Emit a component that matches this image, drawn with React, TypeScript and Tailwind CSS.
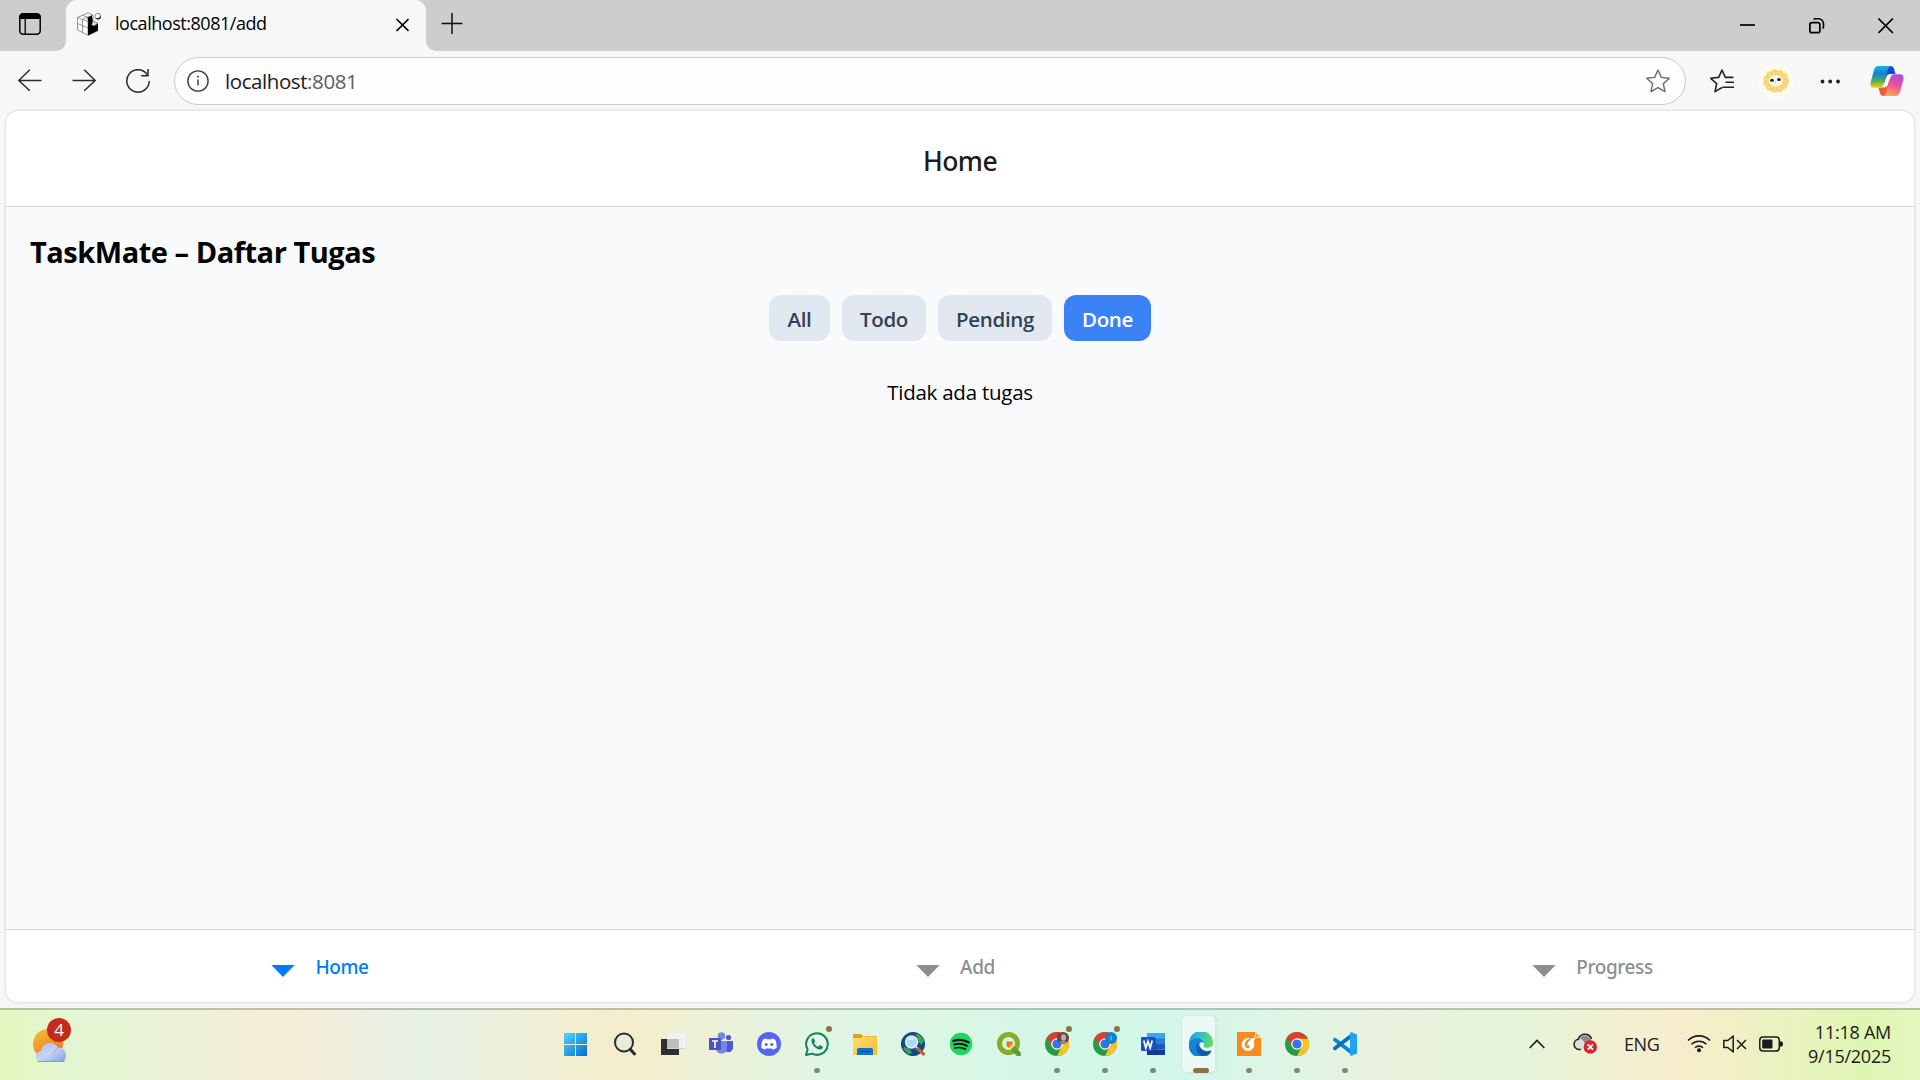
import type { ReactNode } from "react";

type IconProps = { w?: number; h?: number; className?: string; children: ReactNode };

function Icon({ w = 24, h = 24, className = "", children }: IconProps) {
  return (
    <svg width={w} height={h} viewBox={`0 0 ${w} ${h}`} fill="none" className={`shrink-0 ${className}`}>
      {children}
    </svg>
  );
}

/* ---------- Browser chrome ---------- */

function CubeFavicon() {
  return (
    <Icon>
      <path d="M.5 5.500 11 .8l5 2.200v6l4.500 2v8L11 23.300.5 18Z" fill="#fff" stroke="#8a8a8a" strokeWidth=".9" strokeLinejoin="round" />
      <path d="M.5 5.500 11 9.500M5.500 3.200 11 5.500M5.500 7.500v13M.5 11.500 11 16M11 9.500V23M5.500 7.500 15.500 3" stroke="#8a8a8a" strokeWidth=".9" />
      <path d="m10.500 5.500 4.500-2 .8 6-4.800 1Z" fill="#000" />
      <path d="M11 10.500 15.500 9v4.500l5.500-2v7L11 23.500Z" fill="#000" />
      <path d="m14.500 12.300 2.500-1.800 3.500 1-3.500 2.200Z" fill="#eee" stroke="#888" strokeWidth=".6" />
      <circle cx="21" cy="4.300" r="3" fill="#fff" stroke="#777" strokeWidth=".8" />
      <path d="M18.300 6a3.200 3.200 0 0 0 5.700-2.500c-1 2-3 3-5.700 2.500Z" fill="#111" />
    </Icon>
  );
}

function TabStrip() {
  return (
    <div className="flex h-[51px] bg-[#f7f7f7]">
      <div className="w-[66px] rounded-br-[10px] bg-[#cdcdcd] pt-[13px] pl-[19px]">
        <Icon w={22} h={22}>
          <rect x=".8" y=".8" width="20.400" height="20.400" rx="3.500" stroke="#000" strokeWidth="1.500" />
          <path d="M.5 6V3.500a3 3 0 0 1 3-3h15a3 3 0 0 1 3 3V6Z" fill="#000" />
          <path d="M6.200 6v15" stroke="#000" strokeWidth="1.300" />
        </Icon>
      </div>
      <div className="w-[360px] bg-[linear-gradient(#cdcdcd_50%,#f7f7f7_50%)]">
        <div className="flex h-[51px] items-start rounded-t-[11px] bg-[#f7f7f7] pt-3 pl-[11px]">
          <CubeFavicon />
          <span className="ml-[14px] w-[280px] text-[18px] leading-[22px] tracking-[-0.46px] text-black">localhost:8081/add</span>
          <Icon w={14} h={14} className="mt-1.5">
            <path d="m1.500 1 12 12M13.500 1l-12 12" stroke="#000" strokeWidth="1.600" />
          </Icon>
        </div>
      </div>
      <div className="flex flex-1 rounded-bl-[10px] bg-[#cdcdcd] pl-[15px]">
        <Icon w={22} h={22} className="mt-3">
          <path d="M11 1v21M.5 11.500h21" stroke="#111" strokeWidth="1.500" />
        </Icon>
        <div className="ml-auto flex gap-[53px] pt-[18px] pr-[26px]">
          <Icon w={16} h={16}>
            <path d="M0 7h15" stroke="#000" strokeWidth="1.700" />
          </Icon>
          <Icon w={16} h={16}>
            <rect x=".9" y="4.700" width="10" height="10" rx="2" stroke="#000" strokeWidth="1.700" />
            <path d="M4.500 1.200C5 .9 6 .8 7 .8h2.500a5 5 0 0 1 5 5V8c0 1.300-.2 2-.6 2.700" stroke="#000" strokeWidth="1.600" />
          </Icon>
          <Icon w={16} h={16}>
            <path d="m.4.5 14.500 14.500M14.900.5.4 15" stroke="#000" strokeWidth="1.700" />
          </Icon>
        </div>
      </div>
    </div>
  );
}

function Toolbar() {
  return (
    <div className="flex h-[60px] items-center bg-[#f7f7f7] pl-[18px]">
      <Icon>
        <path d="M23.500 11.500H.8M11.800.8.8 11.500l11 10.200" stroke="#2a2a2a" strokeWidth="1.500" />
      </Icon>
      <Icon className="ml-[30px]">
        <path d="M.5 11.500h22.700M12.200.8l11 10.700-11 10.200" stroke="#2a2a2a" strokeWidth="1.500" />
      </Icon>
      <Icon className="ml-[30px]">
        <path d="M21.200 5.500A11.200 11.200 0 1 0 23.200 12" stroke="#2a2a2a" strokeWidth="1.500" />
        <path d="M22 0v6.800h-6.800" stroke="#2a2a2a" strokeWidth="1.500" />
      </Icon>
      <div className="ml-6 flex h-12 w-[1512px] items-center rounded-full border-[1.500px] border-[#cbcbcb] bg-[#fdfdfd] pr-[15px] pl-3">
        <Icon w={22} h={22}>
          <circle cx="11" cy="11" r="10.100" stroke="#3c3c3c" strokeWidth="1.400" />
          <path d="M11 9.500v6" stroke="#3c3c3c" strokeWidth="1.500" />
          <circle cx="11" cy="6.700" r="1" fill="#3c3c3c" />
        </Icon>
        <span className="ml-4 flex-1 text-[20.500px] leading-[27px] tracking-[-0.42px] text-[#1b1b1b]">
          localhost<span className="text-[#5c5c5c]">:8081</span>
        </span>
        <Icon>
          <path d="m12 1 3.300 7.400 8 .9-6 5.400 1.700 7.900-7-4-7 4 1.700-7.900-6-5.400 8-.9Z" stroke="#6b6b6b" strokeWidth="1.400" strokeLinejoin="round" />
        </Icon>
      </div>
      <Icon className="ml-6">
        <path d="M12.500 18.300 5 22.600l1.700-7.900-6-5.400 8-.9L12 1l3.300 7.400h8.200M15.500 13.200h8.500M12.500 18.300h11.500" stroke="#222" strokeWidth="1.600" strokeLinejoin="round" />
      </Icon>
      <Icon w={36} h={36} className="ml-6">
        <circle cx="18" cy="18" r="17.600" fill="#fefbee" />
        {[0, 1, 2, 3, 4, 5, 6, 7, 8, 9, 10].map((i) => (
          <circle
            key={i}
            cx={18 + 9.500 * Math.cos((i * 2 * Math.PI) / 11)}
            cy={18 + 8.300 * Math.sin((i * 2 * Math.PI) / 11)}
            r="3"
            fill="#f7dd74"
            stroke="#e6c353"
            strokeWidth=".6"
          />
        ))}
        <ellipse cx="17.800" cy="18" rx="7.600" ry="6.400" fill="#fdf3e3" stroke="#e8c97e" strokeWidth=".7" />
        <ellipse cx="14" cy="17.300" rx="1.900" ry="1.500" fill="#222" />
        <ellipse cx="20.900" cy="16.600" rx="1.900" ry="1.500" fill="#222" />
        <circle cx="17.500" cy="19" r=".6" fill="#c77" />
      </Icon>
      <Icon w={20} h={6} className="ml-[26px]">
        <circle cx="2.500" cy="3.500" r="1.900" fill="#222" />
        <circle cx="10.200" cy="3.500" r="1.900" fill="#222" />
        <circle cx="18" cy="3.500" r="1.900" fill="#222" />
      </Icon>
      <Icon w={34} h={32} className="ml-[30px]">
        <defs>
          <linearGradient id="cpA" x1="0" y1="0" x2="0" y2="1">
            <stop offset="0" stopColor="#17b2ea" />
            <stop offset=".35" stopColor="#1482dc" />
            <stop offset=".68" stopColor="#51ac54" />
            <stop offset="1" stopColor="#f5d400" />
          </linearGradient>
          <linearGradient id="cpB" x1=".7" y1="0" x2=".4" y2="1">
            <stop offset="0" stopColor="#a64ee8" />
            <stop offset=".5" stopColor="#ef5195" />
            <stop offset="1" stopColor="#ffa457" />
          </linearGradient>
        </defs>
        <path d="M16 1h4.500c2 0 3 1.200 3.600 3l1.400 5h-5C18 9 17 10 16.500 12l-3 8Z" fill="#1748c9" />
        <path d="M18 31h-4.500c-2 0-3-1.200-3.600-3L8.500 22.500h5c2.500 0 3.500-1 4-3l3-8Z" fill="#ee5a35" />
        <path d="M8.500 1H21c-1.600.4-2.500 1.800-3.200 4l-4.200 14c-.8 2.600-1.600 3.800-4.100 3.800H4C1 22.800-.1 20.500.7 17L4 5C4.800 2.400 6 1 8.500 1Z" fill="url(#cpA)" />
        <path d="M25.500 31H13c1.600-.4 2.500-1.800 3.200-4l4.200-14c.8-2.600 1.600-3.800 4.100-3.800H30c3 0 4.100 2.300 3.300 5.800L30 27c-.8 2.600-2 4-4.500 4Z" fill="url(#cpB)" />
        <path d="M18.200 10.300h3.300c-.8.6-1.300 1.500-1.700 2.700l-2.400 7.300c-.4 1.200-.9 1.700-2 1.700h-2.700c.7-.5 1.100-1.400 1.500-2.700l2-6.700c.4-1.400.9-2.300 2-2.300Z" fill="#fff" />
      </Icon>
    </div>
  );
}

/* ---------- Page ---------- */

const filters = [
  { label: "All", style: "w-[61px] bg-[#e2e8f0] text-[#334155]" },
  { label: "Todo", style: "w-[84px] bg-[#e2e8f0] text-[#334155]" },
  { label: "Pending", style: "w-[114px] bg-[#e2e8f0] text-[#334155]" },
  { label: "Done", style: "w-[87px] bg-[#3b82f6] text-white" },
];

const tabs = [
  { label: "Home", style: "text-[#007aff] pr-[8px]" },
  { label: "Add", style: "text-[#8e8e8f] pr-[9px]" },
  { label: "Progress", style: "text-[#8e8e8f] pr-[7px]" },
];

function Page() {
  return (
    <div className="mx-[6px] flex h-[891px] flex-col overflow-hidden rounded-xl bg-white shadow-[0_0_2px_1px_#dedede]">
      <header className="flex h-24 items-center justify-center border-b border-[#d8d8d8] pt-[5px] font-['Noto_Sans',sans-serif] text-[26.500px] leading-9 font-medium tracking-[-0.55px] text-[#1c1c1e]">
        Home
      </header>
      <main className="flex-1 bg-[#f9fafc] px-6 pt-[25px]">
        <h1 className="text-[29px] leading-10 font-bold tracking-[-0.47px] text-black">TaskMate – Daftar Tugas</h1>
        <div className="mt-[23px] flex justify-center gap-3">
          {filters.map((f) => (
            <button key={f.label} className={`h-[46px] rounded-xl pt-[3px] text-[20.500px] font-semibold tracking-[-0.3px] ${f.style}`}>
              {f.label}
            </button>
          ))}
        </div>
        <p className="mt-9 text-center text-[20.500px] leading-[30px] tracking-[-0.24px] text-black">Tidak ada tugas</p>
      </main>
      <nav className="grid h-[73px] grid-cols-3 border-t border-[#d8d8d8]">
        {tabs.map((t) => (
          <div
            key={t.label}
            className={`flex items-center justify-center gap-5 font-['Noto_Sans',sans-serif] text-[19px] font-medium tracking-[-0.4px] ${t.style}`}
          >
            <Icon w={24} h={12} className="mt-[10px]">
              <path d="M.3 0h23.400L12 12Z" fill="currentColor" />
            </Icon>
            <span className="pt-[3px]">{t.label}</span>
          </div>
        ))}
      </nav>
    </div>
  );
}

/* ---------- Taskbar icons ---------- */

function WindowsLogo() {
  return (
    <Icon className="-translate-x-[1px]">
      <defs>
        <linearGradient id="win" x1="0" y1="0" x2="1" y2="1">
          <stop offset="0" stopColor="#4fd4fb" />
          <stop offset="1" stopColor="#0070d2" />
        </linearGradient>
      </defs>
      <path d="M0 1h11v11H0ZM12 1h11v11H12ZM0 13h11v11H0ZM12 13h11v11H12Z" fill="url(#win)" />
    </Icon>
  );
}

function SearchLogo() {
  return (
    <Icon>
      <circle cx="11" cy="10.500" r="9" fill="#e9ecd9" stroke="#2b2b2b" strokeWidth="2" />
      <path d="m17.300 17.300 4.200 4.700" stroke="#2b2b2b" strokeWidth="3" strokeLinecap="round" />
    </Icon>
  );
}

function TaskViewLogo() {
  return (
    <Icon>
      <path d="M0 7h18v16H0Z" fill="#2f2f2f" />
      <path d="M6 1h18v16H6Z" fill="#f2f2f4" />
      <path d="M6 7h12v10H6Z" fill="#bdbdbd" />
      <path d="M6 16.500h18" stroke="#cfcfcf" />
    </Icon>
  );
}

function TeamsLogo() {
  return (
    <Icon>
      <circle cx="19.500" cy="5.500" r="2.600" fill="#5059c9" />
      <path d="M15 9h9v7a4.500 4.500 0 0 1-7 3.500Z" fill="#5059c9" />
      <circle cx="12.500" cy="4" r="3.700" fill="#7b83eb" />
      <path d="M7 9h11v8a5.600 5.600 0 0 1-11 0Z" fill="#7b83eb" />
      <rect y="6" width="12" height="12" rx="1" fill="#4b53bc" />
      <path d="M3 9h6M6 9v7" stroke="#fff" strokeWidth="1.600" />
    </Icon>
  );
}

function DiscordLogo() {
  return (
    <Icon>
      <circle cx="12" cy="12" r="12" fill="#5865f2" />
      <path
        d="M9.500 6.500c-1.300.2-2.500.6-3.500 1.100C4.700 10 4.100 13 4.500 16c1.200.9 2.500 1.400 3.800 1.700l.9-1.500c1.800.5 3.800.5 5.600 0l.9 1.500c1.300-.3 2.600-.8 3.800-1.700.4-3-.2-6-1.500-8.400-1-.5-2.200-.9-3.500-1.100l-.5 1c-1.300-.2-2.700-.2-4 0Z"
        fill="#fff"
      />
      <circle cx="9.200" cy="12.500" r="1.600" fill="#5865f2" />
      <circle cx="14.800" cy="12.500" r="1.600" fill="#5865f2" />
    </Icon>
  );
}

function WhatsAppLogo() {
  return (
    <Icon>
      <path d="M1 23l1.600-5.600A10.800 10.800 0 1 1 7 21.600Z" fill="#e3f5ea" stroke="#12855a" strokeWidth="2" strokeLinejoin="round" />
      <path
        d="M8.300 6c-.5 0-1.800.9-1.800 2.900 0 3.600 4.800 8.600 8.600 8.600 1.700 0 2.800-1.200 2.800-2.300 0-.4 0-.6-.3-.7l-2.500-1.200c-.4-.2-.6 0-.9.300l-.9 1.100c-2-.6-3.500-2-4.300-3.800l.8-1c.2-.3.2-.5.100-.8l-1.100-2.700C8.700 6.100 8.500 6 8.300 6Z"
        fill="#12855a"
      />
    </Icon>
  );
}

function ExplorerLogo() {
  return (
    <Icon>
      <defs>
        <linearGradient id="folder" x1="0" y1="0" x2="1" y2="1">
          <stop offset="0" stopColor="#ffdc72" />
          <stop offset="1" stopColor="#fbbd2d" />
        </linearGradient>
      </defs>
      <path d="M0 2.500Q0 2 .8 2H8l2 2h13q1 0 1 1v4H0Z" fill="#e2a10c" />
      <path d="M0 6h8l2-1.500h14V23H0Z" fill="url(#folder)" />
      <path d="M4 23v-5.500A1.500 1.500 0 0 1 5.500 16h13a1.500 1.500 0 0 1 1.500 1.500V23Z" fill="#0f73c8" />
      <path d="M7 19.500h10" stroke="#0a4a85" strokeWidth="1.200" />
    </Icon>
  );
}

function GlobeSearchLogo() {
  return (
    <Icon>
      <circle cx="12" cy="12" r="11.600" fill="#124b8a" stroke="#0b2e5d" strokeWidth=".8" />
      <path d="M15 1.500c4 1 7 4 8 8l-3 3-4-3ZM4 15l5 2 2 4-3 1.500C5.500 21 3.500 19 2 16Z" fill="#3fa05b" />
      <circle cx="10.500" cy="10" r="5.800" fill="#a9dcf6" stroke="#e8eef2" strokeWidth="1.700" />
      <path d="M8 7.500q2-1.800 4 0" stroke="#fff" strokeWidth="1.300" />
      <path d="m15 15 2.500 2.500" stroke="#eee" strokeWidth="2" />
      <path d="m17 17 5.500 5" stroke="#c26134" strokeWidth="3.200" strokeLinecap="round" />
    </Icon>
  );
}

function SpotifyLogo() {
  return (
    <Icon>
      <circle cx="12" cy="12" r="11.200" fill="#1ed760" />
      <path d="M4.500 8.800c5-1.500 10.500-1 15 1.500" stroke="#111" strokeWidth="2.300" strokeLinecap="round" />
      <path d="M5.200 12.500c4.500-1.200 9-.8 12.800 1.300" stroke="#111" strokeWidth="1.900" strokeLinecap="round" />
      <path d="M5.900 16c3.800-1 7.500-.6 10.700 1.200" stroke="#111" strokeWidth="1.600" strokeLinecap="round" />
    </Icon>
  );
}

function QgisLogo() {
  return (
    <Icon>
      <circle cx="11.500" cy="11.500" r="9" stroke="#86ad29" strokeWidth="5" />
      <path d="M12.500 16.500 16 13l7.800 7.500V24h-4Z" fill="#64993a" />
      <path d="m12 16 3.500-4 2 2-4 4Z" fill="#f3e24f" />
      <path d="M9.500 9.500H16l-.5 2.500-3.500 4-2.500-2Z" fill="#ee7222" />
      <path d="m13 14.500 1.800-2" stroke="#f6c46a" />
    </Icon>
  );
}

function ChromeLogo({ badge }: { badge?: ReactNode }) {
  return (
    <Icon>
      <circle cx="12" cy="12" r="12" fill="#269b46" />
      <path d="M12 6.500H22.700A12 12 0 0 1 12 24L16.700 14.800Z" fill="#fcc31e" />
      <path d="M12 0A12 12 0 0 0 1.610 6l5.500 8.500L12 6.500H22.700A12 12 0 0 0 12 0Z" fill="#e33b2e" />
      <circle cx="12" cy="12" r="5.800" fill="#fff" />
      <circle cx="12" cy="12" r="4.600" fill="#3474ea" />
      {badge}
    </Icon>
  );
}

function WordLogo() {
  return (
    <Icon>
      <path d="M6 1h18v6H6Z" fill="#41a5ee" />
      <path d="M6 6.500h18V12H6Z" fill="#2b7cd3" />
      <path d="M6 12h18v5.500H6Z" fill="#185abd" />
      <path d="M6 17.500h18V23H6Z" fill="#103f91" />
      <path d="M6 6h9v14H6Z" fill="#0b2c63" opacity=".45" />
      <rect y="5" width="14" height="14" rx="1" fill="#1a54b8" />
      <path d="m2.800 8.500 2 7.500L7 9.300 9.200 16l2-7.500" stroke="#fff" strokeWidth="1.700" />
    </Icon>
  );
}

function EdgeLogo() {
  return (
    <Icon>
      <defs>
        <linearGradient id="edgeTop" x1="0" y1=".3" x2="1" y2=".4">
          <stop offset="0" stopColor="#1b9fe0" />
          <stop offset=".5" stopColor="#35c1c9" />
          <stop offset="1" stopColor="#68dd4b" />
        </linearGradient>
        <linearGradient id="edgeLow" x1="0" y1="0" x2="1" y2="1">
          <stop offset="0" stopColor="#1270c0" />
          <stop offset="1" stopColor="#0c4a92" />
        </linearGradient>
      </defs>
      <path d="M0 11A12 12 0 0 1 24 11c0 3.500-2.300 5.300-5.300 5.300s-4.700-.8-4.700-1.900c0-.6 1-1 1-2.900C15 9.500 12.500 8 9.500 8 5 8 0 10 0 15Z" fill="url(#edgeTop)" />
      <path d="M0 12C.4 8.500 4 6.500 8 6.500c3.800 0 6.500 2 7 5-1.400-1.600-4.300-1.500-4.300 1.300 0 4.500 4 7.200 8.300 7.200 1.500 0 2.800-.4 3.800-1.200A12 12 0 0 1 0 12Z" fill="#1583d6" />
      <path d="M10.500 9.800c-2.800 1.200-4 3.900-3.500 7 .6 3.800 3.300 6.500 6.500 7.100 3.700-.3 7-2.200 9-5.300-.8-.2-2 .6-4 .6-4.500 0-8.300-3.400-7.800-7.200.1-.8.4-1.500-.2-2.200Z" fill="url(#edgeLow)" />
      <circle cx="12.600" cy="12.500" r="2.300" fill="#ecf8f5" />
      <path d="M13 14.500c2.500 2.300 6.500 2.700 10 .8" stroke="#ecf8f5" strokeWidth="1.600" strokeLinecap="round" />
      <path d="m22.500 15.200 1.500-1v4l-1.200.2c-.9-.8-1-2-.3-3.200Z" fill="#ecf8f5" />
    </Icon>
  );
}

function OrangeReaderLogo() {
  return (
    <Icon>
      <path d="M0 0h18.500L24 5.500V24H0Z" fill="#f68b1f" />
      <path d="M18.500 0v5.500H24Z" fill="#f7a34d" stroke="#fdf3e4" strokeWidth=".9" />
      <circle cx="11" cy="12.500" r="6.400" fill="#fff" />
      <path d="M15.500 7c-5-1-8.500 2.500-7.500 7.500.8 1.500 2.500 2 4 1.500l.8-2.700h-1.500C11 10.500 12.500 8.500 15.500 7Z" fill="#f68b1f" />
      <path d="M18.500 5.500C14 6 10.800 8.500 10 14c1.500-1.700 5-1.500 6.500-4.500 1-1.200 1.600-2.500 2-4Z" fill="#fff" />
    </Icon>
  );
}

function CodeLogo() {
  return (
    <Icon>
      <path d="M2 7.700 18 20" stroke="#0a86d6" strokeWidth="3.800" strokeLinecap="round" />
      <path d="M2 16.300 18 4" stroke="#0473be" strokeWidth="3.800" strokeLinecap="round" />
      <path d="m17 .8 1.500-.6L24 2.500v19l-5.500 2.300-1.500-.6Z" fill="#21a2f1" />
    </Icon>
  );
}

type TaskItem = { icon: ReactNode; running?: boolean; alert?: boolean; active?: boolean };

const taskItems: TaskItem[] = [
  { icon: <WindowsLogo /> },
  { icon: <SearchLogo /> },
  { icon: <TaskViewLogo /> },
  { icon: <TeamsLogo /> },
  { icon: <DiscordLogo /> },
  { icon: <WhatsAppLogo />, running: true, alert: true },
  { icon: <ExplorerLogo /> },
  { icon: <GlobeSearchLogo /> },
  { icon: <SpotifyLogo /> },
  { icon: <QgisLogo /> },
  {
    icon: (
      <ChromeLogo
        badge={
          <g>
            <circle cx="18" cy="6" r="6" fill="#5a4a52" />
            <ellipse cx="18.500" cy="5.500" rx="2.500" ry="3.200" fill="#d9a38f" />
            <path d="M14.500 10.500q3.500-3.500 7.500-.2-3.500 3-7.500.2Z" fill="#8d8f9c" />
          </g>
        }
      />
    ),
    running: true,
    alert: true,
  },
  {
    icon: (
      <ChromeLogo
        badge={
          <g>
            <circle cx="18" cy="6" r="6" fill="#0a84cc" />
            <path d="M18 3.800v4.600" stroke="#8cc8ea" strokeWidth="1.100" />
          </g>
        }
      />
    ),
    running: true,
    alert: true,
  },
  { icon: <WordLogo />, running: true },
  { icon: <EdgeLogo />, active: true },
  { icon: <OrangeReaderLogo />, running: true },
  { icon: <ChromeLogo />, running: true },
  { icon: <CodeLogo />, running: true },
];

function TaskButton({ icon, running, alert, active }: TaskItem) {
  return (
    <div className="relative flex h-full w-12 items-center justify-center pb-[2px]">
      {active && (
        <>
          <div className="absolute top-[5px] left-[8px] h-[59px] w-[33px] rounded-[6px] border border-[#cfe5df]" />
          <div className="absolute top-[5px] left-[4px] h-[58px] w-[35px] rounded-[6px] border border-[#d3e8e3] bg-[#ecfaf7]" />
        </>
      )}
      <div className="relative">{icon}</div>
      {alert && <div className="absolute top-4 right-[9px] size-[6px] rounded-full bg-[#8a7638]" />}
      {running && <div className="absolute bottom-[7px] left-[21px] h-[5px] w-[6px] rounded-full bg-[#7e8a82]" />}
      {active && <div className="absolute bottom-[7px] left-4 h-[5px] w-4 rounded-full bg-[#8a7638]" />}
    </div>
  );
}

function Taskbar() {
  return (
    <div className="flex h-[72px] border-t-2 border-black/20 bg-[linear-gradient(90deg,#e3f7bf_0px,#e3f6d4_80px,#f7eed8_285px,#e7f2e7_420px,#f5edcb_620px,#e2f5e3_810px,#d3f7e6_1080px,#d3f7ea_1190px,#eaf1de_1390px,#e3f5da_1500px,#f8edcc_1680px,#def6b4_1870px,#e4f6bd_1920px)] bg-origin-border text-[#1a1a1a]">
      <div className="relative w-[553px] pt-[9px] pl-[33px]">
        <Icon w={38} h={45}>
          <defs>
            <linearGradient id="sun" x1="0" y1="0" x2=".7" y2="1">
              <stop offset="0" stopColor="#eec433" />
              <stop offset="1" stopColor="#f4711f" />
            </linearGradient>
            <linearGradient id="cloud" x1="0" y1="0" x2="1" y2="1">
              <stop offset="0" stopColor="#a9bff0" />
              <stop offset=".5" stopColor="#c5d4f6" />
              <stop offset="1" stopColor="#7f9fde" />
            </linearGradient>
          </defs>
          <circle cx="15" cy="25" r="15" fill="url(#sun)" />
          <path d="M8.500 43a5.500 5.500 0 0 1-.5-11c.8-4.500 4.500-8 9.200-8 4 0 6.500 2 7.800 5 4-1.500 8 2 8 7.500 0 4-2 6.500-5.500 6.500Z" fill="url(#cloud)" />
          <path d="M20 35q1.500-4 5-6" stroke="#8faae4" strokeWidth="1" />
          <path d="M5 42.500h26" stroke="#7d9ce0" strokeWidth="1.200" strokeLinecap="round" />
        </Icon>
        <span className="absolute top-2 left-[47px] flex size-6 items-center justify-center rounded-full bg-[#c42b1c] text-[17px] text-white">4</span>
      </div>
      <div className="flex">
        {taskItems.map((item, i) => (
          <TaskButton key={i} {...item} />
        ))}
      </div>
      <div className="ml-auto flex w-[391px] items-center pb-[6px]">
        <Icon w={16} h={10} className="mt-[3px]">
          <path d="m.7 9 7.300-7.500L15.300 9" stroke="#1a1a1a" strokeWidth="1.600" />
        </Icon>
        <Icon className="mt-1 ml-7">
          <path d="M6 17.500a5.200 5.200 0 0 1-.7-10.300C6.500 3.500 9 2.200 12 2.200c3.300 0 5.600 1.800 6.500 4.800l1 5-7 5.500Z" fill="#dededb" />
          <path d="M7 6.500c2-3.500 8-4.500 10.500.5l1 4-6.500 1Q10.500 7.500 7 6.500Z" fill="#8b8b8b" />
          <path d="M8 17.500H6a5.200 5.200 0 0 1-.7-10.300C6.500 3.500 9 2.200 12 2.200c3.300 0 5.600 1.800 6.500 4.800" stroke="#222" strokeWidth="1.600" />
          <circle cx="17.300" cy="15" r="6.700" fill="#d9252f" />
          <path d="m14.700 12.400 5.200 5.200m0-5.200-5.200 5.200" stroke="#fff" strokeWidth="1.700" />
        </Icon>
        <span className="mt-[3px] ml-[27px] w-9 text-[18px] leading-6 tracking-[-0.4px]">ENG</span>
        <Icon className="mt-[3px] ml-[27px]">
          <path d="M1 8.500a15.500 15.500 0 0 1 22 0M4.500 12.300a10.600 10.600 0 0 1 15 0M8 15.800a5.700 5.700 0 0 1 8 0" stroke="#1a1a1a" strokeWidth="1.600" />
          <circle cx="12" cy="18.300" r="2" fill="#1a1a1a" />
        </Icon>
        <Icon className="mt-[3px] ml-3">
          <path d="M.8 8.500h4L10.200 4v16l-5.400-4.500h-4Z" stroke="#1a1a1a" strokeWidth="1.500" strokeLinejoin="round" />
          <path d="m14 8 9 9M23 8l-9 9" stroke="#1a1a1a" strokeWidth="1.500" />
        </Icon>
        <Icon className="mt-[3px] ml-3">
          <rect x=".8" y="5" width="19.500" height="14" rx="3.200" stroke="#1a1a1a" strokeWidth="1.500" />
          <rect x="3.200" y="7.500" width="10.300" height="9" rx="1" fill="#1a1a1a" />
          <path d="M21 9.300c2 0 3 .8 3 2.700s-1 2.700-3 2.700Z" fill="#1a1a1a" />
        </Icon>
        <div className="mt-[3px] flex-1 pr-[29px] text-right text-[18px] leading-6 tracking-[-0.25px]">
          <p>11:18 AM</p>
          <p>9/15/2025</p>
        </div>
      </div>
    </div>
  );
}

export default function App() {
  return (
    <div className="flex h-[1080px] w-[1920px] flex-col overflow-hidden bg-[#f7f7f7] font-['Open_Sans','Noto_Sans',sans-serif]">
      <TabStrip />
      <Toolbar />
      <Page />
      <div className="h-[6px]" />
      <Taskbar />
    </div>
  );
}
